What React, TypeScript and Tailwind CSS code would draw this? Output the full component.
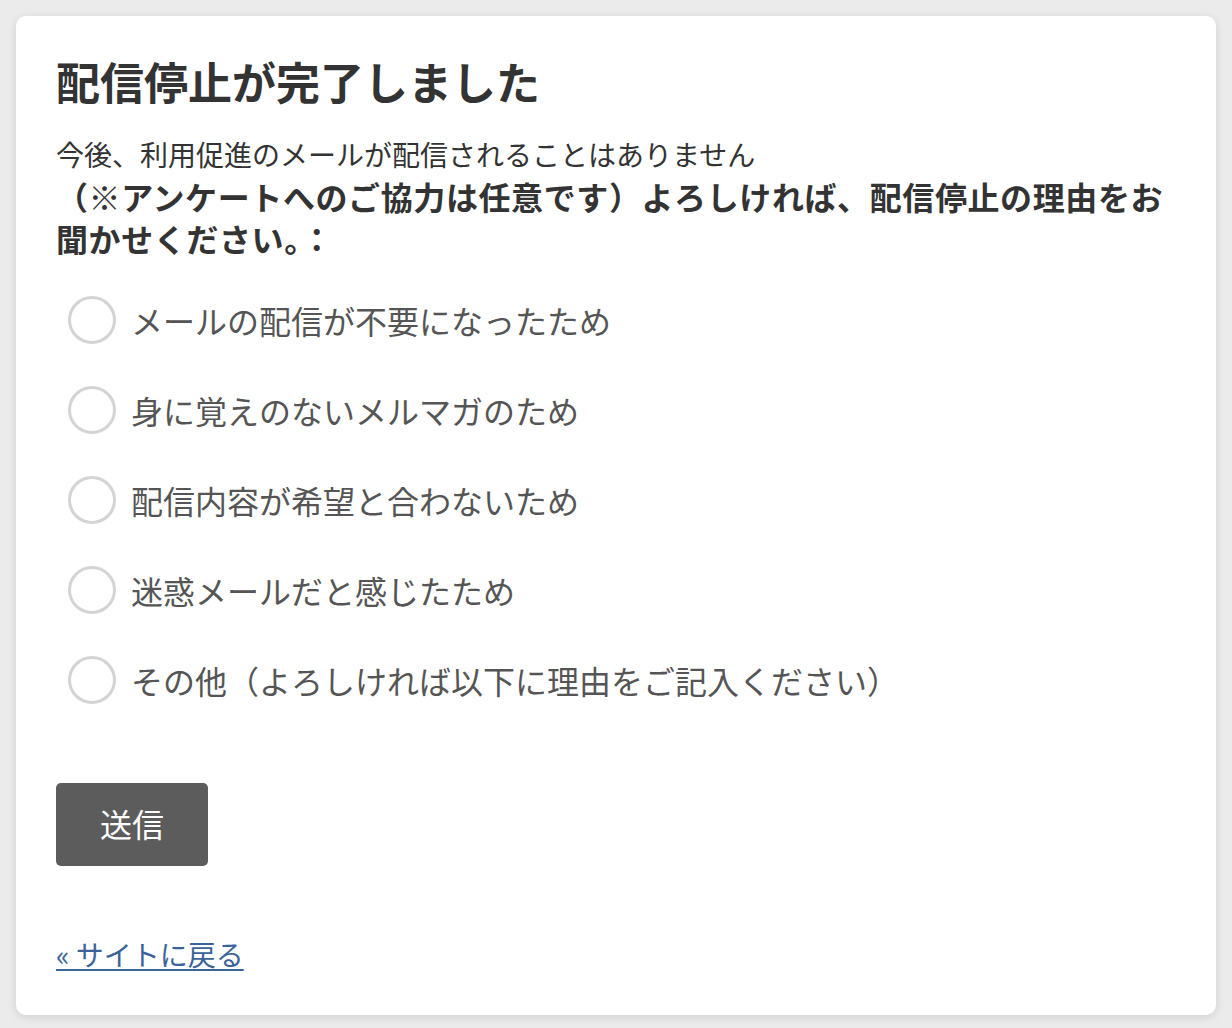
import React from "react";

const options = [
  "メールの配信が不要になったため",
  "身に覚えのないメルマガのため",
  "配信内容が希望と合わないため",
  "迷惑メールだと感じたため",
  "その他（よろしければ以下に理由をご記入ください）",
];

export default function App() {
  return (
    <div
      className="min-h-[1028px] w-full bg-[#ebebeb] p-4"
      style={{ fontFamily: '"Noto Sans CJK JP", "Noto Sans", sans-serif' }}
    >
      <div className="rounded-[10px] bg-white px-10 pt-10 pb-10 shadow-[0_2px_8px_rgba(0,0,0,0.12)]">
        <h1 className="text-[44px] font-bold leading-[50px] text-[#333333]">
          配信停止が完了しました
        </h1>
        <p className="mt-[27px] text-[28px] leading-[42px] text-[#333333]">
          今後、利用促進のメールが配信されることはありません
        </p>
        <p className="text-[32px] font-bold leading-[42px] tracking-[0.6px] text-[#333333]">
          （※アンケートへのご協力は任意です）よろしければ、配信停止の理由をお聞かせください。：
        </p>
        <div className="mt-4 flex flex-col">
          {options.map((o) => (
            <label key={o} className="flex h-[90px] items-center pl-3">
              <span className="h-[48px] w-[48px] shrink-0 rounded-full border-[3px] border-[#d4d4d4] bg-white" />
              <span className="ml-[15px] text-[32px] leading-[44px] text-[#555555]">
                {o}
              </span>
            </label>
          ))}
        </div>
        <button className="mt-[58px] flex h-[83px] w-[152px] items-center justify-center rounded-[5px] bg-[#5c5c5c] pb-1 text-[32px] text-white">
          送信
        </button>
        <div className="mt-[67px]">
          <a
            href="#"
            className="text-[28px] leading-[42px] text-[#3a6399] underline decoration-2 underline-offset-[3px]"
          >
            «&nbsp;サイトに戻る
          </a>
        </div>
      </div>
    </div>
  );
}
